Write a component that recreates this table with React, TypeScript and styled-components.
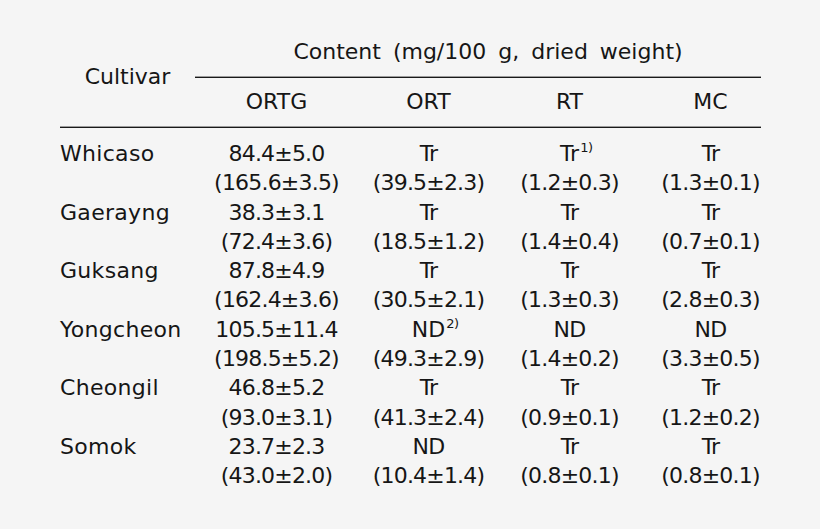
import React from 'react';
import styled, { createGlobalStyle } from 'styled-components';

const GlobalStyle = createGlobalStyle`
    html, body {
        margin: 0;
        padding: 0;
        background: #f5f5f5;
    }
    body {
        font-family: "DejaVu Sans", "Liberation Sans", sans-serif;
        color: #161616;
    }
`;

const Page = styled.div`
    width: 820px;
    height: 529px;
    box-sizing: border-box;
    padding: 37px 0 0 60px;
    background: #f5f5f5;
`;

const Table = styled.div`
    display: grid;
    grid-template-columns: 135px 163px 141px 141px 141px;
    font-size: 22px;
`;

const Rule = styled.div<{ $from: number }>`
    grid-column: ${p => p.$from} / 6;
    margin-right: 20px;
    height: 1px;
    border-top: 1px solid #9c9c9c;
    background: #1a1a1a;
`;

const CultivarHead = styled.div`
    grid-column: 1;
    grid-row: 1 / 4;
    align-self: center;
    text-align: center;
    padding-bottom: 10px;
`;

const ContentHead = styled.div`
    grid-column: 2 / 6;
    text-align: center;
    line-height: 30px;
    padding-bottom: 9px;
    word-spacing: 5px;
`;

const ColHead = styled.div<{ $first?: boolean }>`
    grid-column: ${p => (p.$first ? 2 : 'auto')};
    text-align: center;
    line-height: 48px;
`;

const Body = styled.div`
    grid-column: 1 / 6;
    display: grid;
    grid-template-columns: subgrid;
    padding-top: 11px;
`;

const Name = styled.div`
    line-height: 29.3px;
    letter-spacing: 0.3px;
`;

const Cell = styled.div`
    text-align: center;
    line-height: 29.3px;
    letter-spacing: -0.8px;
`;

const Mark = styled.span`
    position: relative;
    letter-spacing: 0;
`;

const Sup = styled.span`
    position: absolute;
    left: calc(100% + 1px);
    top: 0;
    font-size: 13px;
    line-height: 1;
    letter-spacing: -0.5px;
`;

type Row = { name: string; values: [string, string][]; };

const rows: Row[] = [
    { name: 'Whicaso', values: [['84.4±5.0', '(165.6±3.5)'], ['Tr', '(39.5±2.3)'], ['Tr|1)', '(1.2±0.3)'], ['Tr', '(1.3±0.1)']] },
    { name: 'Gaerayng', values: [['38.3±3.1', '(72.4±3.6)'], ['Tr', '(18.5±1.2)'], ['Tr', '(1.4±0.4)'], ['Tr', '(0.7±0.1)']] },
    { name: 'Guksang', values: [['87.8±4.9', '(162.4±3.6)'], ['Tr', '(30.5±2.1)'], ['Tr', '(1.3±0.3)'], ['Tr', '(2.8±0.3)']] },
    { name: 'Yongcheon', values: [['105.5±11.4', '(198.5±5.2)'], ['ND|2)', '(49.3±2.9)'], ['ND', '(1.4±0.2)'], ['ND', '(3.3±0.5)']] },
    { name: 'Cheongil', values: [['46.8±5.2', '(93.0±3.1)'], ['Tr', '(41.3±2.4)'], ['Tr', '(0.9±0.1)'], ['Tr', '(1.2±0.2)']] },
    { name: 'Somok', values: [['23.7±2.3', '(43.0±2.0)'], ['ND', '(10.4±1.4)'], ['Tr', '(0.8±0.1)'], ['Tr', '(0.8±0.1)']] },
];

const Value: React.FC<{ text: string }> = ({ text }) => {
    const [main, note] = text.split('|');
    if (!note) return <>{main}</>;
    return <Mark>{main}<Sup>{note}</Sup></Mark>;
};

export default function App() {
    return (
        <Page>
            <GlobalStyle />
            <Table>
                <CultivarHead>Cultivar</CultivarHead>
                <ContentHead>Content (mg/100 g, dried weight)</ContentHead>
                <Rule $from={2} />
                <ColHead $first>ORTG</ColHead>
                <ColHead>ORT</ColHead>
                <ColHead>RT</ColHead>
                <ColHead>MC</ColHead>
                <Rule $from={1} />
                <Body>
                    {rows.map(r => (
                        <React.Fragment key={r.name}>
                            <Name>{r.name}</Name>
                            {r.values.map(([a], i) => <Cell key={'a' + i}><Value text={a} /></Cell>)}
                            <Name />
                            {r.values.map(([, b], i) => <Cell key={'b' + i}>{b}</Cell>)}
                        </React.Fragment>
                    ))}
                </Body>
            </Table>
        </Page>
    );
}
